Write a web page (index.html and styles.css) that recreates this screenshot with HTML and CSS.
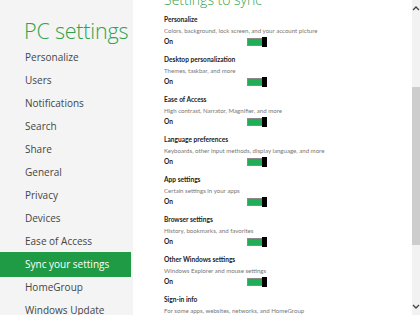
FILE: index.html
```html
<!DOCTYPE html>
<html>
<head>
<meta charset="utf-8">
<link rel="stylesheet" href="styles.css">
</head>
<body>
<div class="app">
  <nav class="nav">
    <h1 class="title">PC settings</h1>
    <ul class="menu">
      <li class="item">Personalize</li>
      <li class="item">Users</li>
      <li class="item">Notifications</li>
      <li class="item">Search</li>
      <li class="item">Share</li>
      <li class="item">General</li>
      <li class="item">Privacy</li>
      <li class="item">Devices</li>
      <li class="item">Ease of Access</li>
      <li class="item selected">Sync your settings</li>
      <li class="item">HomeGroup</li>
      <li class="item">Windows Update</li>
    </ul>
  </nav>
  <main class="main">
    <h2 class="heading">Settings to sync</h2>
    <section class="setting">
      <div class="s-title">Personalize</div>
      <div class="s-desc">Colors, background, lock screen, and your account picture</div>
      <div class="s-row"><span class="s-state">On</span><span class="toggle"><span class="thumb"></span></span></div>
    </section>
    <section class="setting">
      <div class="s-title">Desktop personalization</div>
      <div class="s-desc">Themes, taskbar, and more</div>
      <div class="s-row"><span class="s-state">On</span><span class="toggle"><span class="thumb"></span></span></div>
    </section>
    <section class="setting">
      <div class="s-title">Ease of Access</div>
      <div class="s-desc">High contrast, Narrator, Magnifier, and more</div>
      <div class="s-row"><span class="s-state">On</span><span class="toggle"><span class="thumb"></span></span></div>
    </section>
    <section class="setting">
      <div class="s-title">Language preferences</div>
      <div class="s-desc">Keyboards, other input methods, display language, and more</div>
      <div class="s-row"><span class="s-state">On</span><span class="toggle"><span class="thumb"></span></span></div>
    </section>
    <section class="setting">
      <div class="s-title">App settings</div>
      <div class="s-desc">Certain settings in your apps</div>
      <div class="s-row"><span class="s-state">On</span><span class="toggle"><span class="thumb"></span></span></div>
    </section>
    <section class="setting">
      <div class="s-title">Browser settings</div>
      <div class="s-desc">History, bookmarks, and favorites</div>
      <div class="s-row"><span class="s-state">On</span><span class="toggle"><span class="thumb"></span></span></div>
    </section>
    <section class="setting">
      <div class="s-title">Other Windows settings</div>
      <div class="s-desc">Windows Explorer and mouse settings</div>
      <div class="s-row"><span class="s-state">On</span><span class="toggle"><span class="thumb"></span></span></div>
    </section>
    <section class="setting">
      <div class="s-title">Sign-in info</div>
      <div class="s-desc">For some apps, websites, networks, and HomeGroup</div>
    </section>
  </main>
  <div class="scrollbar">
    <svg class="arrow" width="8" height="6" viewBox="0 0 8 6"><path d="M1 5 L4 2 L7 5" fill="none" stroke="#444" stroke-width="1.4"/></svg>
    <div class="track"><div class="sthumb"></div></div>
    <svg class="arrow" width="8" height="6" viewBox="0 0 8 6"><path d="M1 1 L4 4 L7 1" fill="none" stroke="#444" stroke-width="1.4"/></svg>
  </div>
</div>
</body>
</html>
```
FILE: styles.css
```css
html, body {
  margin: 0;
  padding: 0;
  width: 420px;
  height: 315px;
  overflow: hidden;
  background: #ffffff;
  font-family: "Open Sans", "Noto Sans", sans-serif;
}
.app {
  display: flex;
  height: 315px;
}
.nav {
  width: 133px;
  flex: none;
  background: #f4f4f4;
  display: flex;
  flex-direction: column;
}
.title {
  margin: 16px 0 0 24px;
  font-size: 21.5px;
  line-height: 30px;
  font-weight: 300;
  letter-spacing: -0.2px;
  color: #2da34c;
  white-space: nowrap;
}
.menu {
  list-style: none;
  margin: 0;
  padding: 0;
}
.item {
  height: 23px;
  line-height: 23px;
  padding-left: 25px;
  font-size: 10px;
  color: #454545;
  white-space: nowrap;
}
.item.selected {
  background: #1f9b45;
  color: #ffffff;
  margin-right: 2px;
  height: 25px;
  line-height: 25px;
  margin-top: -1px;
  margin-bottom: -1px;
}
.main {
  flex: 1;
  padding-left: 31px;
  overflow: hidden;
}
.heading {
  margin: -9px 0 0 0;
  font-size: 14px;
  line-height: 18px;
  font-weight: 300;
  color: #2da34c;
  white-space: nowrap;
}
.setting {
  margin-top: 7px;
}
.heading + .setting {
  margin-top: 5px;
}
.s-title, .s-desc, .s-row {
  height: 11px;
  line-height: 11px;
  white-space: nowrap;
}
.s-title {
  font-family: "Lato", "Open Sans", sans-serif;
  font-size: 6.6px;
  font-weight: 700;
  color: #222;
}
.s-desc {
  font-family: "Lato", "Open Sans", sans-serif;
  font-size: 6.1px;
  color: #777;
}
.s-row {
  display: flex;
  align-items: center;
}
.s-state {
  width: 83px;
  font-family: "Lato", "Open Sans", sans-serif;
  font-size: 6.6px;
  font-weight: 700;
  color: #222;
}
.toggle {
  width: 20px;
  height: 8px;
  box-sizing: border-box;
  border: 1px solid #8a8a8a;
  background: #1fae55;
  display: flex;
  justify-content: flex-end;
}
.thumb {
  width: 5px;
  height: 10px;
  margin: -2px -1px 0 0;
  background: #000;
}
.scrollbar {
  width: 8px;
  flex: none;
  background: #f2f2f2;
  display: flex;
  flex-direction: column;
  align-items: center;
}
.arrow {
  flex: none;
  margin: 5px 0;
}
.track {
  flex: 1;
  width: 8px;
  display: flex;
  flex-direction: column;
}
.sthumb {
  margin-top: 71px;
  height: 158px;
  background: #cdcdcd;
}
```
